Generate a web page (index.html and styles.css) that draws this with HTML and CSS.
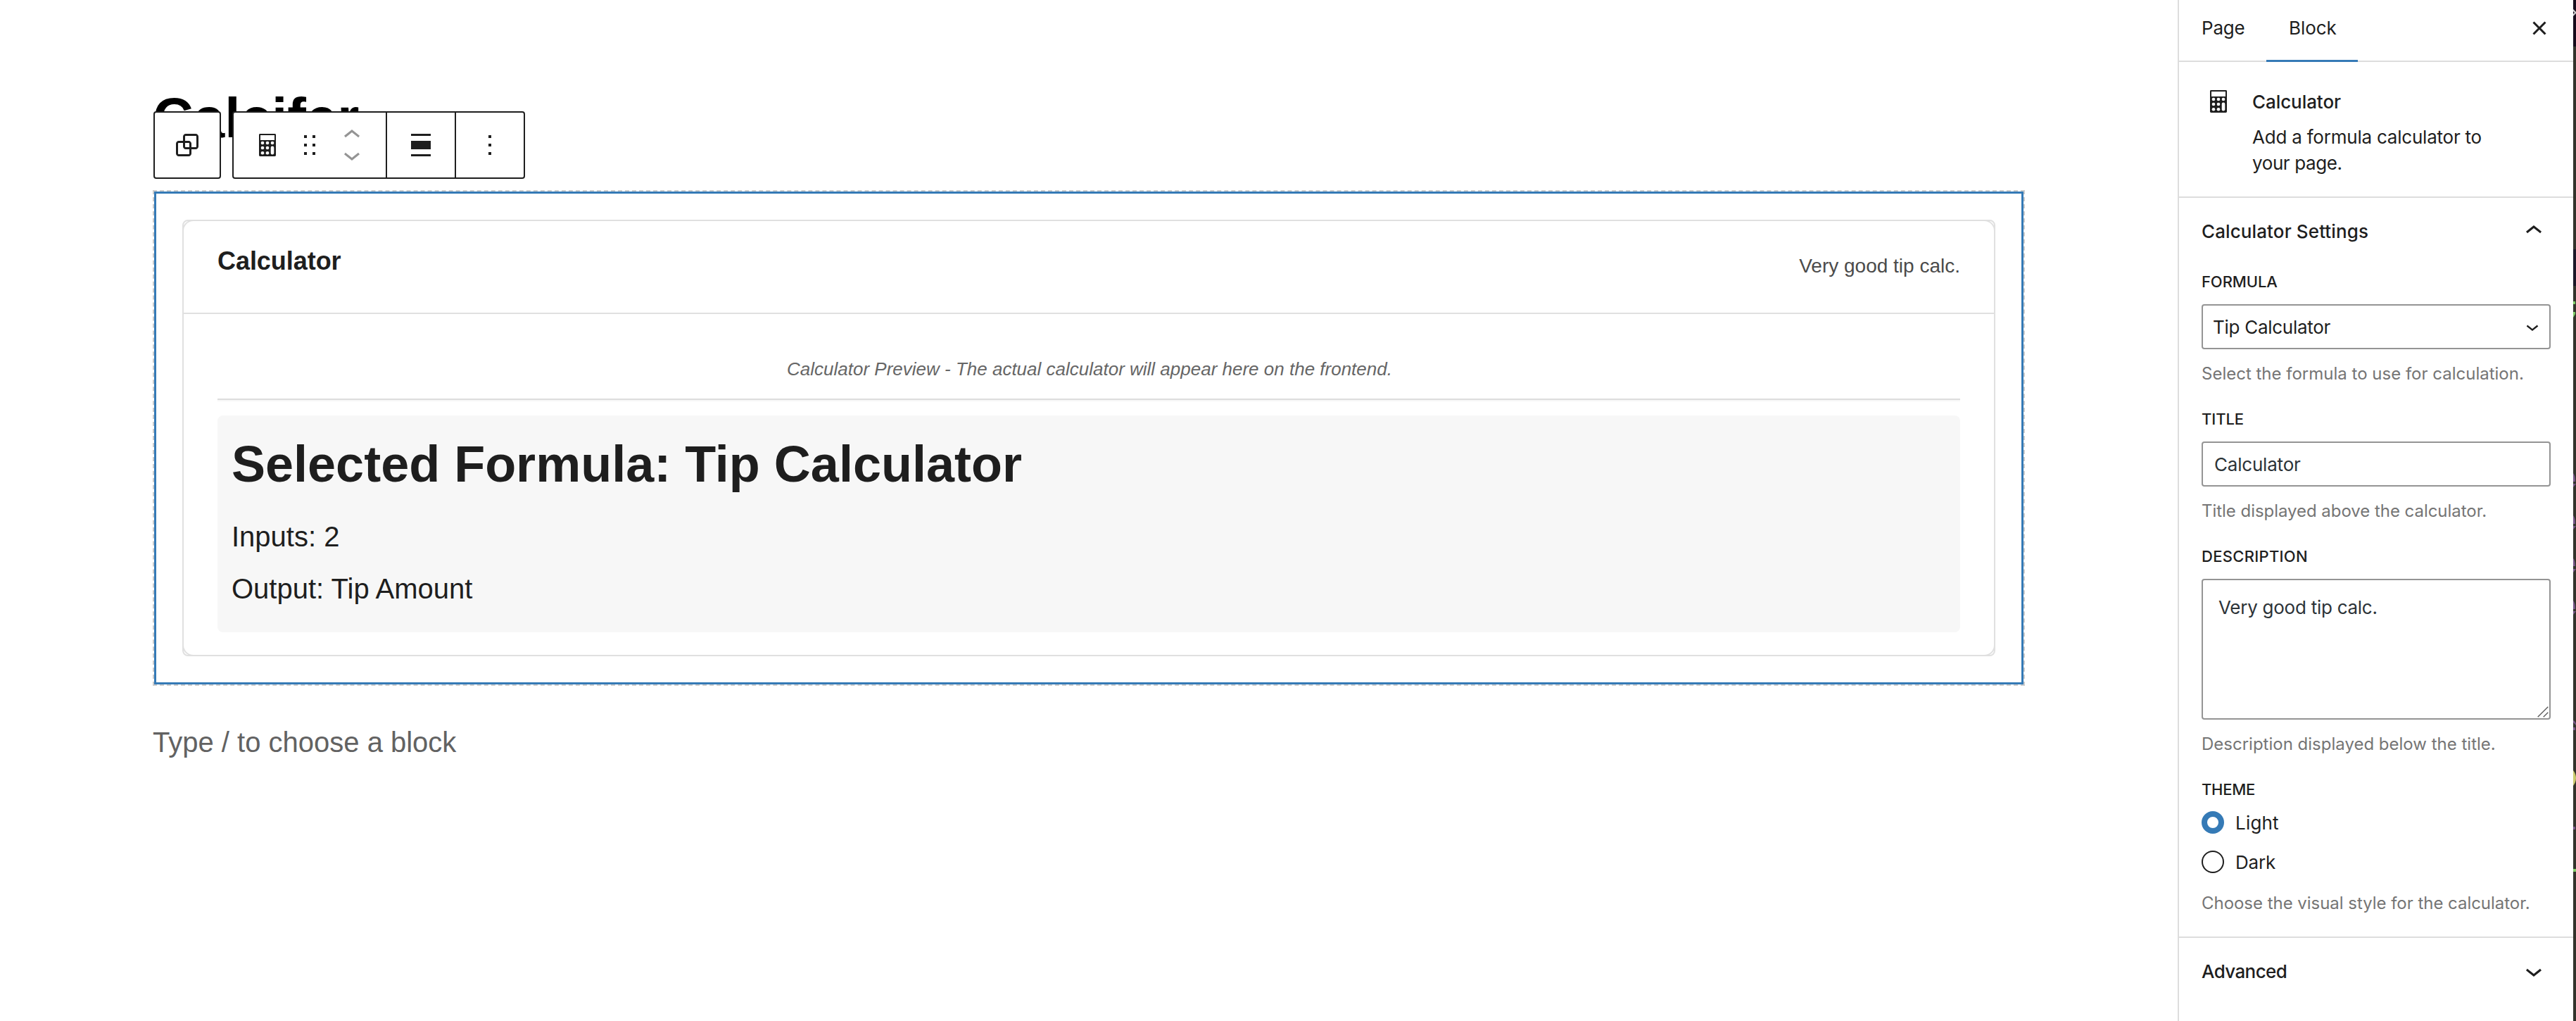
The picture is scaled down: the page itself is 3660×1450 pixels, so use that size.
FILE: index.html
```html
<!DOCTYPE html>
<html lang="en">
<head>
<meta charset="utf-8">
<title>Calcifer</title>
<link rel="stylesheet" href="styles.css">
</head>
<body>
<svg class="defs" width="0" height="0">
  <defs>
    <symbol id="calc" viewBox="0 0 20 20"><path fill="#1e1e1e" fill-rule="evenodd" d="M4.7 2h10.6a.7.7 0 0 1 .7.7v14.6a.7.7 0 0 1-.7.7H4.700a.7.7 0 0 1-.7-.7V2.700A.7.7 0 0 1 4.700 2zM5 3v3.500h10V3z"/><g fill="#fff"><circle cx="6.500" cy="8.500" r="1.150"/><circle cx="10" cy="8.500" r="1.150"/><circle cx="13.500" cy="8.500" r="1.150"/><circle cx="6.500" cy="12" r="1.150"/><circle cx="10" cy="12" r="1.150"/><circle cx="6.500" cy="15.600" r="1.150"/><circle cx="10" cy="15.600" r="1.150"/><rect x="12.350" y="10.700" width="2.300" height="6.100" rx="1.150"/></g></symbol>
    <symbol id="up" viewBox="0 0 24 24"><path d="M6.500 12.400L12 8l5.500 4.400-.9 1.200L12 10l-4.500 3.600-1-1.200z"/></symbol>
    <symbol id="down" viewBox="0 0 24 24"><path d="M17.500 11.600L12 16l-5.500-4.400.9-1.200L12 14l4.500-3.600 1 1.200z"/></symbol>
  </defs>
</svg>

<main class="editor">
  <h1 class="page-title">Calcifer</h1>

  <div class="toolbar">
    <div class="toolbar-group toolbar-cell">
      <svg class="icon" viewBox="0 0 24 24"><path d="M18 4h-7c-1.100 0-2 .9-2 2v3H6c-1.100 0-2 .9-2 2v7c0 1.100.9 2 2 2h7c1.100 0 2-.9 2-2v-3h3c1.100 0 2-.9 2-2V6c0-1.100-.9-2-2-2zm-4.500 14c0 .3-.2.5-.5.5H6c-.3 0-.5-.2-.5-.5v-7c0-.3.2-.5.5-.5h3V13c0 1.100.9 2 2 2h2.500v3zm0-4.500H11c-.3 0-.5-.2-.5-.5v-2.500H13c.3 0 .5.2.5.5v2.500zm5-.5c0 .3-.2.5-.5.5h-3V11c0-1.100-.9-2-2-2h-2.500V6c0-.3.2-.5.5-.5h7c.3 0 .5.2.5.5v7z"/></svg>
    </div>
    <div class="toolbar-group">
      <div class="toolbar-block">
        <svg class="dashicon"><use href="#calc"/></svg>
        <svg class="icon drag" viewBox="0 0 24 24"><path d="M8 7h2V5H8v2zm0 6h2v-2H8v2zm0 6h2v-2H8v2zm6-14v2h2V5h-2zm0 8h2v-2h-2v2zm0 6h2v-2h-2v2z"/></svg>
        <svg class="movers" viewBox="0 0 24 38"><path d="M6.500 12.400L12 8l5.500 4.400-.9 1.200L12 10l-4.500 3.600-1-1.200z"/><path transform="translate(0 14)" d="M17.500 11.600L12 16l-5.500-4.400.9-1.200L12 14l4.500-3.600 1 1.200z"/></svg>
      </div>
      <div class="toolbar-cell divided"><svg class="icon" viewBox="0 0 24 24"><path d="M5 4h14v1.500H5zM5 9h14v6H5zM5 18.500h14V20H5z"/></svg></div>
      <div class="toolbar-cell divided"><svg class="icon" viewBox="0 0 24 24"><path d="M11 5h2v2h-2zM11 11h2v2h-2zM11 17h2v2h-2z"/></svg></div>
    </div>
  </div>

  <section class="block">
    <div class="block-focus">
      <div class="calc-wrap">
        <div class="calc-card">
          <header class="calc-head">
            <h2 class="calc-title">Calculator</h2>
            <p class="calc-desc">Very good tip calc.</p>
          </header>
          <div class="calc-body">
            <p class="preview-note">Calculator Preview - The actual calculator will appear here on the frontend.</p>
            <div class="rule"></div>
            <div class="summary">
              <h3 class="formula">Selected Formula: Tip Calculator</h3>
              <p class="line">Inputs: 2</p>
              <p class="line">Output: Tip Amount</p>
            </div>
          </div>
        </div>
      </div>
    </div>
  </section>

  <p class="placeholder">Type / to choose a block</p>
</main>

<aside class="sidebar">
  <nav class="tabs">
    <span class="tab">Page</span>
    <span class="tab tab-active">Block</span>
    <svg class="icon close" viewBox="0 0 24 24"><path d="M12 13.060l3.712 3.713 1.061-1.060L13.061 12l3.712-3.712-1.060-1.060L12 10.938 8.288 7.227l-1.061 1.060L10.939 12l-3.712 3.712 1.060 1.061L12 13.061z"/></svg>
  </nav>

  <div class="block-card">
    <div class="card-icon"><svg class="dashicon"><use href="#calc"/></svg></div>
    <div>
      <h2 class="card-title">Calculator</h2>
      <p class="card-text">Add a formula calculator to <span class="tight">your page.</span></p>
    </div>
  </div>

  <section class="panel">
    <div class="panel-head"><h2 class="panel-title settings">Calculator Settings</h2><svg class="icon"><use href="#up"/></svg></div>
    <div class="field">
      <div class="label formula-label">Formula</div>
      <div class="control select"><span>Tip Calculator</span><svg class="select-arrow"><use href="#down"/></svg></div>
      <p class="help">Select the formula to use for calculation.</p>
    </div>
    <div class="field">
      <div class="label">Title</div>
      <div class="control input">Calculator</div>
      <p class="help help-title">Title displayed above the calculator.</p>
    </div>
    <div class="field">
      <div class="label desc-label">Description</div>
      <div class="control textarea">Very good tip calc.<svg class="grip" viewBox="0 0 16 16"><path d="M.7 15.300L15.300.7M8.700 15.300l6.600-6.600"/></svg></div>
      <p class="help help-desc">Description displayed below the title.</p>
    </div>
    <div class="field">
      <div class="label theme-label">Theme</div>
      <div class="radios">
        <div class="radio"><span class="dot dot-on"></span><span class="radio-text light">Light</span></div>
        <div class="radio"><span class="dot"></span><span class="radio-text dark">Dark</span></div>
      </div>
      <p class="help help-theme">Choose the visual style for the calculator.</p>
    </div>
  </section>

  <section class="panel">
    <div class="panel-head"><h2 class="panel-title advanced">Advanced</h2><svg class="icon"><use href="#down"/></svg></div>
  </section>
</aside>

<svg class="edge" viewBox="0 0 4 1450">
  <rect width="4" height="1450" fill="#33332b"/>
  <rect width="4" height="66" fill="#160b1b"/>
  <rect y="354" width="4" height="52" fill="#1b1828"/>
  <path d="M0 13l4 4v2l-4 4v-3l2-2-2-2z" fill="#d0d0d0"/>
  <g fill="#80cc68"><path d="M0 428h3v4H0zM0 443h3v3l-3 5zM0 1234h4v4H0z"/></g>
  <g fill="#755585"><path d="M0 672q3 3 3 12H0zM0 687h4l-4 5zM0 732q3 3 3 12H0zM0 747h4l-4 5zM0 793q3 3 3 11H0zM0 808h4l-4 5zM0 853q3 3 3 12H0zM0 868h4l-4 5zM0 1023q3 1 4 5v2L0 1026zM0 1033h3v4H0zM0 1174h3v4H0z"/></g>
  <path d="M0 1094q4 5 4 11t-4 11z" fill="#cccb70"/>
</svg>
</body>
</html>
```
FILE: styles.css
```css
* { box-sizing: border-box; }
body {
  margin: 0;
  width: 3660px;
  height: 1450px;
  display: flex;
  overflow: hidden;
  background: #fff;
  color: #1e1e1e;
  font-family: "Liberation Sans", Arial, sans-serif;
}
h1, h2, h3, p { margin: 0; }
svg { display: block; flex: none; fill: #1e1e1e; }
.defs { position: absolute; }
.icon { width: 48px; height: 48px; }
.dashicon { width: 40px; height: 40px; }

/* Editor canvas */
.editor { position: relative; flex: 1; padding: 120px 217px 0; }
.page-title { font-size: 80px; line-height: 96px; color: #000; }

.toolbar { position: absolute; left: 218px; top: 158px; display: flex; gap: 16px; }
.toolbar-group {
  display: flex;
  height: 96px;
  background: #fff;
  border: 2px solid #1e1e1e;
  border-radius: 4px;
}
.toolbar-cell { width: 96px; display: flex; align-items: center; justify-content: center; }
.divided { width: 98px; border-left: 2px solid #1e1e1e; }
.toolbar-block { width: 216px; padding-left: 28px; display: flex; align-items: center; }
.drag { margin: 0 12px 0 16px; }
.movers { width: 48px; height: 76px; fill: #949494; }

.block { margin-top: 54px; width: 2660px; height: 704px; border: 2px dashed #ccc; }
.block-focus { height: 100%; padding: 37px; border: 3px solid #357ab6; }
.calc-wrap { height: 100%; border: 2px solid #e0e0e0; border-radius: 8px; }
.calc-card { height: 100%; border-radius: 14px; box-shadow: 0 0 0 2px #e0e0e0; }
.calc-head {
  display: flex;
  justify-content: space-between;
  height: 132px;
  padding: 0 48px;
  border-bottom: 2px solid #e0e0e0;
}
.calc-title { padding-top: 35px; font-size: 36px; line-height: 44px; letter-spacing: -.05px; }
.calc-desc { padding-top: 44px; font-size: 28px; line-height: 40px; color: #4b4b4b; }
.calc-body { padding: 60px 48px 32px; }
.preview-note { padding-left: 2px; font-size: 26px; line-height: 36px; font-style: italic; text-align: center; color: #666; }
.rule { height: 4px; margin: 24px 0 20px; background: #f7f7f7; border-top: 2px solid #ddd; }
.summary { height: 308px; padding: 27px 20px 0; background: #f7f7f7; border-radius: 8px; }
.formula { margin-bottom: 24px; font-size: 72px; line-height: 84px; }
.line { font-size: 40px; line-height: 74px; }
.placeholder { margin-top: 50px; font-size: 40px; line-height: 60px; color: #626262; }

/* Settings sidebar */
.sidebar {
  width: 562px;
  border-left: 2px solid #ddd;
  font-family: Inter, "Noto Sans", sans-serif;
  font-size: 26px;
}
.tabs { display: flex; height: 88px; border-bottom: 2px solid #ddd; }
.tab { width: 124px; height: 88px; padding: 24px 0 0 32px; line-height: 32px; letter-spacing: -.2px; }
.tab-active { width: 130px; border-bottom: 3px solid #357ab6; letter-spacing: -.06px; }
.close { margin: 16px 24px 0 auto; }
.block-card { display: flex; gap: 24px; height: 193px; padding: 32px; border-bottom: 2px solid #ddd; }
.card-icon { width: 48px; height: 48px; display: flex; align-items: center; justify-content: center; }
.card-title { margin: 7px 0 13px; font-size: 26px; font-weight: 500; line-height: 36px; letter-spacing: -.07px; }
.card-text { width: 350px; line-height: 37px; letter-spacing: -.22px; }
.tight { letter-spacing: -.4px; }

.panel { padding: 29px 32px 30px; border-bottom: 2px solid #ddd; }
.panel:last-child { border-bottom: 0; }
.panel-head { height: 36px; display: flex; align-items: center; justify-content: space-between; }
.panel-title { padding-top: 2px; font-size: 26px; font-weight: 500; line-height: 36px; }
.settings { letter-spacing: .11px; }
.advanced { letter-spacing: -.6px; }
.field { margin-top: 31px; }
.panel-head + .field { margin-top: 38px; }
.label { font-size: 22px; font-weight: 500; line-height: 32px; text-transform: uppercase; letter-spacing: -.1px; }
.desc-label { letter-spacing: .29px; }
.theme-label { letter-spacing: -.27px; }
.control {
  height: 64px;
  margin-top: 16px;
  border: 2px solid #949494;
  border-radius: 4px;
  line-height: 62px;
  letter-spacing: -.2px;
}
.select { display: flex; align-items: center; justify-content: space-between; padding: 0 6px 0 14px; letter-spacing: -.28px; }
.select span { padding-top: 1px; }
.select-arrow { width: 36px; height: 36px; }
.input { padding-left: 16px; color: #2c3338; }
.textarea { position: relative; height: 200px; padding: 21px 22px; line-height: 36px; letter-spacing: -.26px; color: #2c3338; }
.grip { position: absolute; right: 1px; bottom: 1px; width: 16px; height: 16px; fill: none; stroke: #555; stroke-width: 1.3; }
.help { margin-top: 18px; font-size: 24px; line-height: 34px; color: #757575; }
.help-title { letter-spacing: -.04px; }
.help-theme { margin-top: 26px; letter-spacing: -.035px; }
.radios { display: grid; gap: 24px; margin-top: 15px; }
.radio { display: flex; align-items: center; gap: 16px; height: 32px; line-height: 32px; }
.radio-text { padding-top: 2px; }
.dot { width: 32px; height: 32px; border: 2px solid #1e1e1e; border-radius: 50%; }
.dot-on { border: 8px solid #357ab6; }
.light { letter-spacing: .2px; }
.dark { letter-spacing: -.19px; }

/* Window behind, visible along the right edge */
.edge { width: 4px; height: 1450px; }
```
